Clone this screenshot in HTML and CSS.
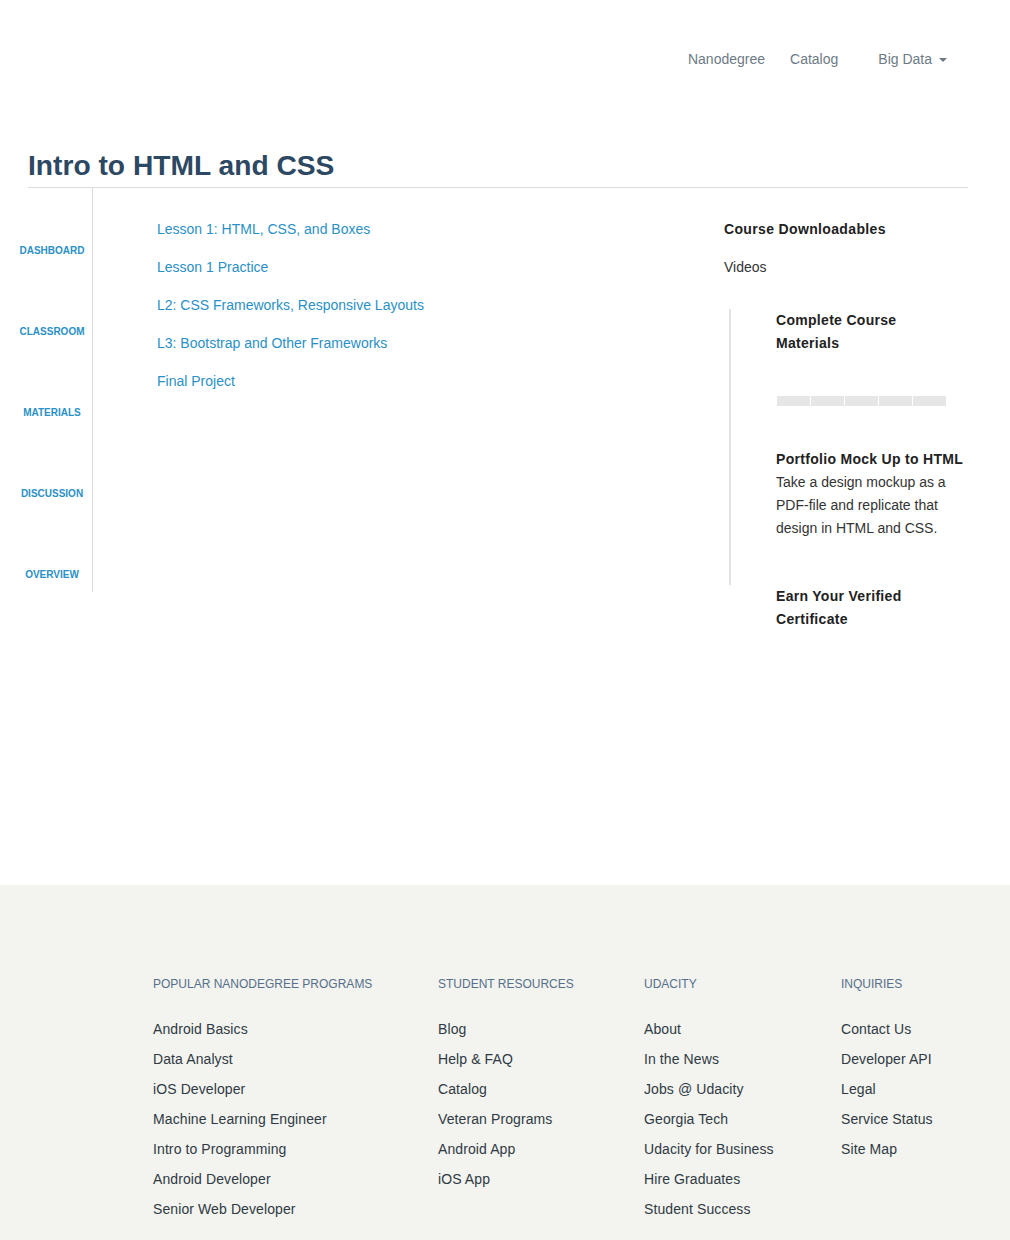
FILE: index.html
```html
<!DOCTYPE html>
<html lang="en">
<head>
<meta charset="utf-8">
<title>Intro to HTML and CSS</title>
<link rel="stylesheet" href="styles.css">
</head>
<body>
<div class="page-main">
  <header class="container site-header">
    <nav class="top-nav">
      <a class="nav-link nav-nanodegree" href="#">Nanodegree</a>
      <a class="nav-link nav-catalog" href="#">Catalog</a>
      <a class="nav-link nav-dropdown" href="#">Big Data<span class="caret"></span></a>
    </nav>
  </header>

  <div class="container">
    <h1 class="course-title">Intro to HTML and CSS</h1>

    <div class="course-body">
      <ul class="side-nav">
        <li><a href="#">Dashboard</a></li>
        <li><a href="#">Classroom</a></li>
        <li><a href="#">Materials</a></li>
        <li><a href="#">Discussion</a></li>
        <li><a href="#">Overview</a></li>
      </ul>

      <ul class="lessons">
        <li><a href="#">Lesson 1: HTML, CSS, and Boxes</a></li>
        <li><a href="#">Lesson 1 Practice</a></li>
        <li><a href="#">L2: CSS Frameworks, Responsive Layouts</a></li>
        <li><a href="#">L3: Bootstrap and Other Frameworks</a></li>
        <li><a href="#">Final Project</a></li>
      </ul>

      <aside class="downloads">
        <h4 class="dl-title">Course Downloadables</h4>
        <p class="dl-item">Videos</p>
        <div class="dl-quote">
          <h4 class="dl-heading">Complete Course<br>Materials</h4>
          <div class="progress">
            <span class="seg"></span><span class="seg"></span><span class="seg"></span><span class="seg"></span><span class="seg"></span>
          </div>
          <h4 class="dl-heading project-heading">Portfolio Mock Up to HTML</h4>
          <p class="dl-desc">Take a design mockup as a PDF-file and replicate that design in HTML and CSS.</p>
        </div>
        <h4 class="dl-heading cert-heading">Earn Your Verified<br>Certificate</h4>
      </aside>
    </div>
  </div>
</div>

<footer class="site-footer">
  <div class="container footer-grid">
    <div class="footer-col">
      <h5>Popular Nanodegree Programs</h5>
      <ul>
        <li><a href="#">Android Basics</a></li>
        <li><a href="#">Data Analyst</a></li>
        <li><a href="#">iOS Developer</a></li>
        <li><a href="#">Machine Learning Engineer</a></li>
        <li><a href="#">Intro to Programming</a></li>
        <li><a href="#">Android Developer</a></li>
        <li><a href="#">Senior Web Developer</a></li>
      </ul>
    </div>
    <div class="footer-col">
      <h5>Student Resources</h5>
      <ul>
        <li><a href="#">Blog</a></li>
        <li><a href="#">Help &amp; FAQ</a></li>
        <li><a href="#">Catalog</a></li>
        <li><a href="#">Veteran Programs</a></li>
        <li><a href="#">Android App</a></li>
        <li><a href="#">iOS App</a></li>
      </ul>
    </div>
    <div class="footer-col">
      <h5>Udacity</h5>
      <ul>
        <li><a href="#">About</a></li>
        <li><a href="#">In the News</a></li>
        <li><a href="#">Jobs @ Udacity</a></li>
        <li><a href="#">Georgia Tech</a></li>
        <li><a href="#">Udacity for Business</a></li>
        <li><a href="#">Hire Graduates</a></li>
        <li><a href="#">Student Success</a></li>
      </ul>
    </div>
    <div class="footer-col">
      <h5>Inquiries</h5>
      <ul>
        <li><a href="#">Contact Us</a></li>
        <li><a href="#">Developer API</a></li>
        <li><a href="#">Legal</a></li>
        <li><a href="#">Service Status</a></li>
        <li><a href="#">Site Map</a></li>
      </ul>
    </div>
  </div>
</footer>
</body>
</html>
```

FILE: styles.css
```css
* {
  box-sizing: border-box;
}

html, body {
  margin: 0;
  padding: 0;
}

body {
  font-family: "Liberation Sans", Arial, Helvetica, sans-serif;
  font-size: 14px;
  line-height: 20px;
  color: #333;
  background: #fff;
}

a {
  text-decoration: none;
}

ul {
  list-style: none;
  margin: 0;
  padding: 0;
}

.container {
  width: 940px;
  margin-left: calc(50% - 477px);
}

.page-main {
  min-height: 885px;
}

/* header */
.site-header {
  padding-top: 49px;
}

.top-nav {
  display: flex;
  justify-content: flex-end;
  padding-right: 21px;
}

.nav-link {
  color: #6d7a86;
  font-size: 14px;
  line-height: 20px;
  display: flex;
  align-items: center;
}

.nav-catalog {
  margin-left: 25px;
}

.nav-dropdown {
  margin-left: 40px;
}

.caret {
  display: inline-block;
  width: 0;
  height: 0;
  margin-left: 7px;
  margin-top: 1px;
  border-top: 4px solid #6d7a86;
  border-left: 4px solid transparent;
  border-right: 4px solid transparent;
}

/* title */
.course-title {
  margin: 80px 0 0;
  padding-bottom: 6px;
  font-size: 28.2px;
  line-height: 32px;
  font-weight: bold;
  color: #2d4862;
  border-bottom: 1px solid #dcdcdc;
}

/* body */
.course-body {
  display: flex;
  align-items: flex-start;
  margin-left: -16px;
}

.side-nav {
  width: 81px;
  flex: none;
  border-right: 1px solid #dcdcdc;
  padding: 55px 0 9px;
  text-align: center;
}

.side-nav li {
  font-size: 10px;
  line-height: 16px;
  height: 16px;
  margin-bottom: 65px;
}

.side-nav li:last-child {
  margin-bottom: 0;
}

.side-nav a {
  font-size: 10px;
  font-weight: bold;
  text-transform: uppercase;
  color: #2a90c6;
}

.lessons {
  width: 631px;
  flex: none;
  padding: 31px 0 0 64px;
}

.lessons li {
  line-height: 20px;
  margin-bottom: 18px;
}

.lessons a {
  color: #2a90c6;
}

.downloads {
  width: 244px;
  flex: none;
  padding-top: 31px;
}

.dl-title {
  margin: 0 0 18px;
  font-size: 14px;
  line-height: 20px;
  font-weight: bold;
  letter-spacing: 0.35px;
  color: #222;
}

.dl-item {
  margin: 0;
  line-height: 20px;
  color: #333;
}

.dl-quote {
  margin: 32px 0 0 5px;
  padding: 0 0 45px 45px;
  border-left: 2px solid #e3e3e3;
}

.dl-heading {
  margin: 0;
  font-size: 14px;
  line-height: 23px;
  font-weight: bold;
  letter-spacing: 0.3px;
  color: #222;
}

.progress {
  display: flex;
  gap: 1px;
  margin: 41px 0 0 1px;
  height: 10px;
}

.seg {
  width: 33px;
  height: 10px;
  background: #e6e6e6;
}

.project-heading {
  margin-top: 42px;
  white-space: nowrap;
}

.dl-desc {
  margin: 0;
  width: 190px;
  line-height: 23px;
  color: #333;
}

.cert-heading {
  padding-left: 52px;
}

/* footer */
.site-footer {
  background: #f3f3ef;
  padding: 91px 0 235px;
}

.footer-grid {
  display: grid;
  grid-template-columns: 285px 206px 197px 1fr;
  padding-left: 125px;
}

.footer-col h5 {
  margin: 0 0 22px;
  font-size: 12px;
  line-height: 16px;
  font-weight: normal;
  text-transform: uppercase;
  color: #56708a;
}

.footer-col li {
  line-height: 30px;
}

.footer-col a {
  color: #2f3a44;
  font-size: 14px;
  letter-spacing: 0.1px;
}
```
